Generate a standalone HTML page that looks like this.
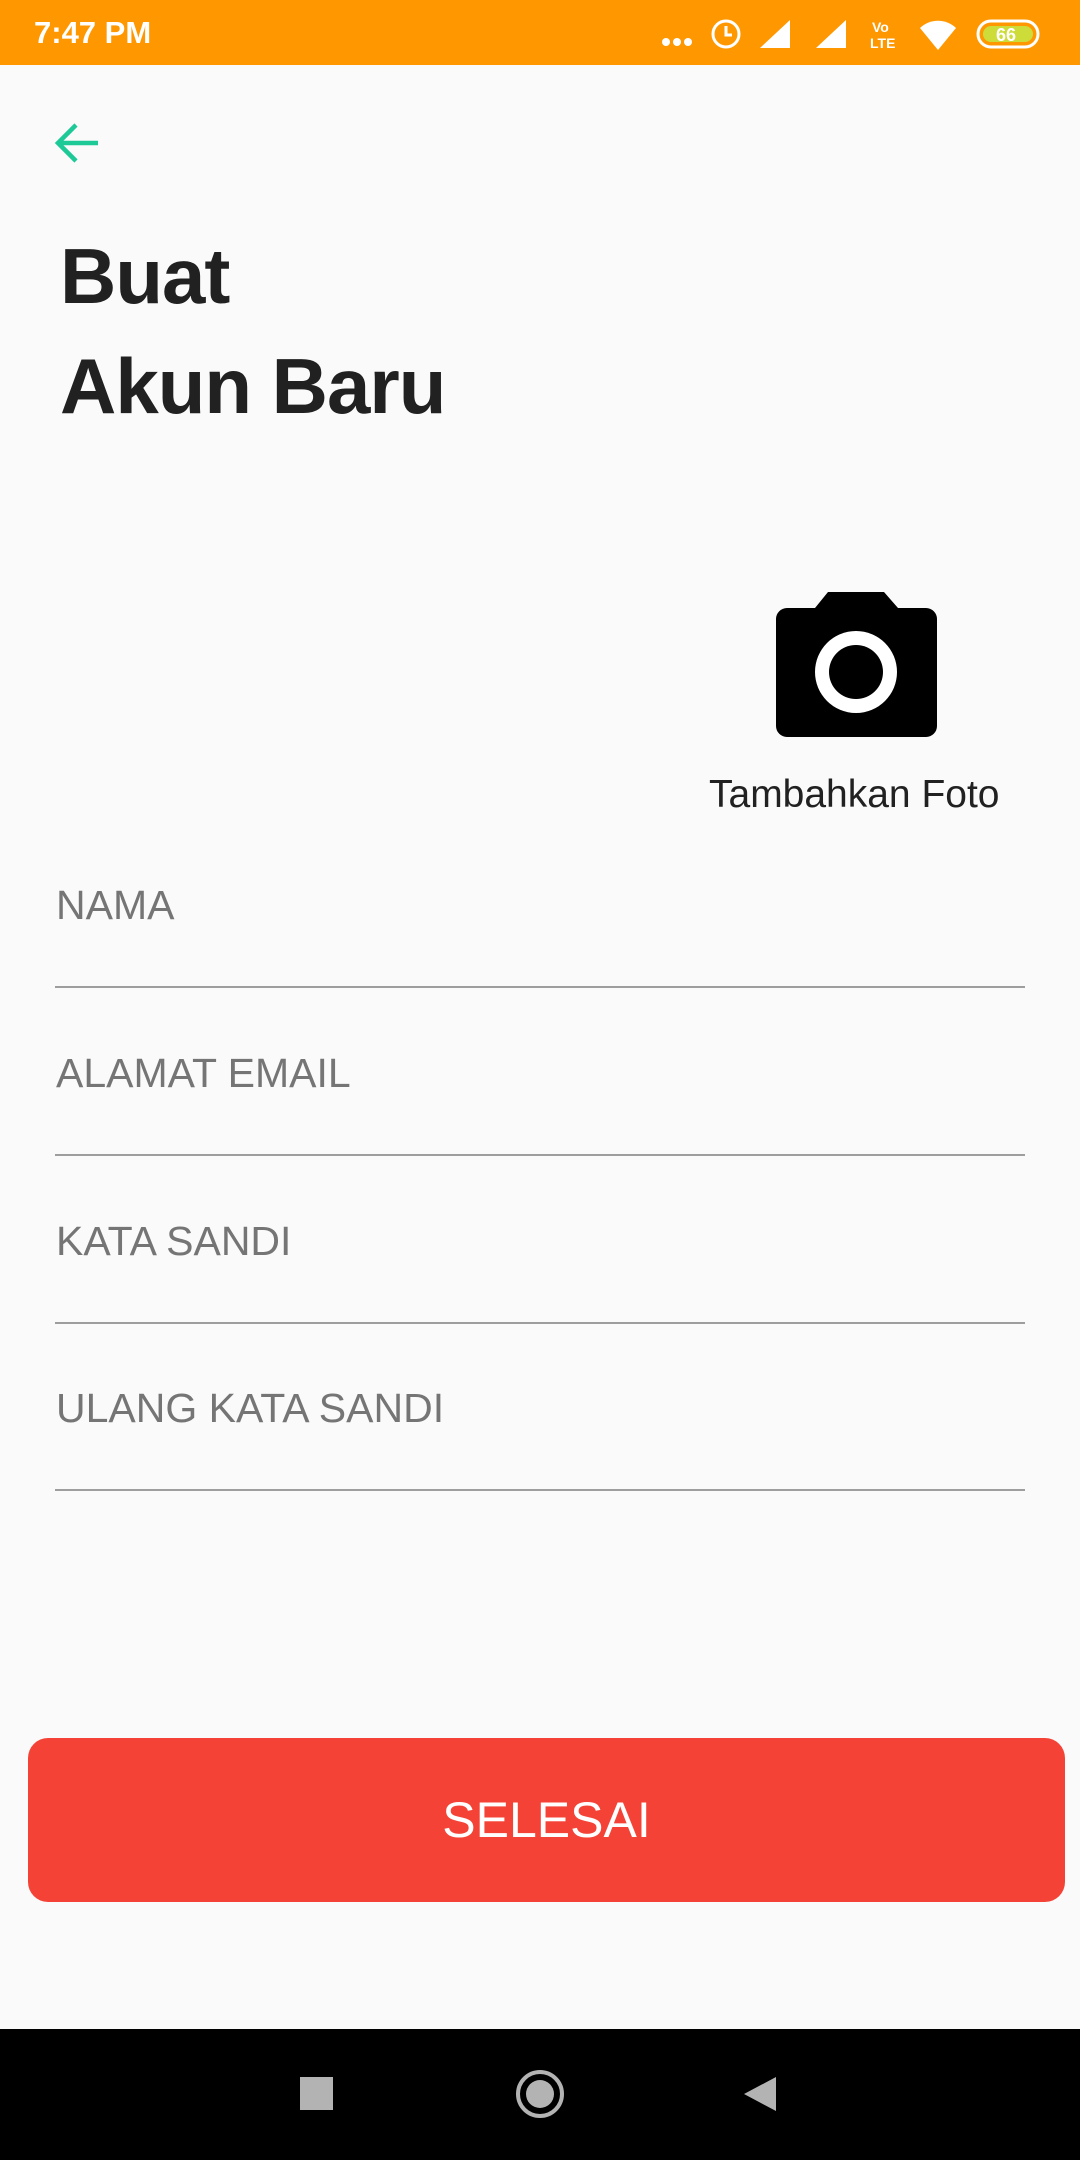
<!DOCTYPE html>
<html><head><meta charset="utf-8">
<style>
*{margin:0;padding:0;box-sizing:border-box}
body{width:1080px;height:2160px;background:#fafafa;font-family:"Liberation Sans",Roboto,sans-serif;position:relative;overflow:hidden}
.sb{position:absolute;left:0;top:0;width:1080px;height:65px;background:#ff9800;color:#fff}
.time{position:absolute;left:34px;top:15px;font-size:31px;font-weight:bold}
.title{position:absolute;left:60px;top:221px;font-size:78px;font-weight:bold;color:#212121;line-height:110px;letter-spacing:-1px}
.lbl{position:absolute;left:56px;font-size:41px;color:#757575}
.line{position:absolute;left:55px;width:970px;height:2px;background:#9e9e9e}
.btn{position:absolute;left:28px;top:1738px;width:1037px;height:164px;background:#f44336;border-radius:20px;color:#fff;font-size:50px;text-align:center;line-height:164px}
.nav{position:absolute;left:0;top:2029px;width:1080px;height:131px;background:#000}
</style></head><body>
<div class="sb"><div class="time">7:47 PM</div>
<svg style="position:absolute;left:660px;top:14px" width="400" height="40" viewBox="0 0 400 40" fill="#fff">
<circle cx="6" cy="28" r="4"/><circle cx="17" cy="28" r="4"/><circle cx="28" cy="28" r="4"/>
<circle cx="66" cy="20" r="13" fill="none" stroke="#fff" stroke-width="3"/><path d="M66 12v9h6" stroke="#fff" stroke-width="3" fill="none"/>
<path d="M100 34h30V6z"/><path d="M156 34h30V6z"/>
<text x="212" y="18" font-size="14" font-weight="bold" fill="#fff">Vo</text><text x="210" y="34" font-size="14" font-weight="bold" fill="#fff">LTE</text>
<path d="M260 14a26 26 0 0 1 36 0l-18 22z"/>
<rect x="318" y="7" width="60" height="26" rx="13" fill="none" stroke="#fff" stroke-width="3"/>
<rect x="323" y="12" width="50" height="16" rx="8" fill="#cddc39"/>
<text x="336" y="27" font-size="18" font-weight="bold" fill="#fff">66</text>
</svg></div>
<svg style="position:absolute;left:52px;top:120px" width="50" height="46" viewBox="0 0 50 46"><path d="M46 23H6M24 5L6 23l18 18" stroke="#1dc996" stroke-width="4.5" fill="none"/></svg>
<div class="title">Buat<br>Akun Baru</div>
<svg style="position:absolute;left:776px;top:592px" width="161" height="145" viewBox="0 0 161 145">
<path d="M52 0h56l14 16h28a11 11 0 0 1 11 11v107a11 11 0 0 1-11 11H11A11 11 0 0 1 0 134V27a11 11 0 0 1 11-11h28z" fill="#000"/>
<circle cx="80" cy="80" r="41" fill="#fff"/><circle cx="80" cy="80" r="27" fill="#000"/></svg>
<div style="position:absolute;left:709px;top:773px;font-size:39px;color:#212121">Tambahkan Foto</div>
<div class="lbl" style="top:882px">NAMA</div><div class="line" style="top:986px"></div>
<div class="lbl" style="top:1050px">ALAMAT EMAIL</div><div class="line" style="top:1154px"></div>
<div class="lbl" style="top:1218px">KATA SANDI</div><div class="line" style="top:1322px"></div>
<div class="lbl" style="top:1385px">ULANG KATA SANDI</div><div class="line" style="top:1489px"></div>
<div class="btn">SELESAI</div>
<div class="nav">
<div style="position:absolute;left:300px;top:48px;width:33px;height:33px;background:#b3b3b3"></div>
<div style="position:absolute;left:516px;top:41px;width:48px;height:48px;border:4px solid #b3b3b3;border-radius:50%"></div>
<div style="position:absolute;left:526px;top:51px;width:28px;height:28px;background:#b3b3b3;border-radius:50%"></div>
<svg style="position:absolute;left:742px;top:46px" width="36" height="38"><path d="M34 2v34L2 19z" fill="#b3b3b3"/></svg>
</div>
</body></html>
